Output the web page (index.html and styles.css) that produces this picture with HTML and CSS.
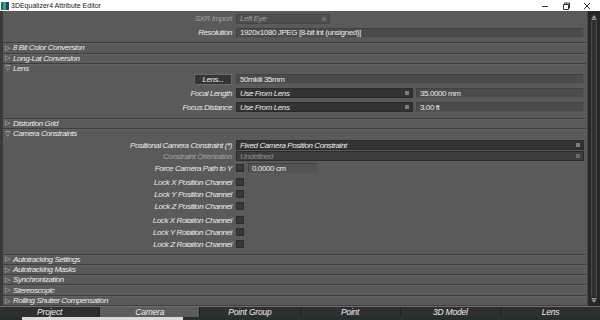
FILE: index.html
```html
<!DOCTYPE html>
<html lang="en">
<head>
    <meta charset="UTF-8">
    <title>3DEqualizer4 Attribute Editor</title>
    <link rel="stylesheet" href="styles.css">
</head>
<body>
<div class="window">
    <!--标题栏-->
    <div class="titlebar">
        <span class="app-icon"></span>
        <span class="title">3DEqualizer4 Attribute Editor</span>
        <div class="winctl">
            <span class="ctl"><svg width="8" height="8" viewBox="0 0 8 8"><path d="M1 4.5h6" stroke="#333" stroke-width="1"/></svg></span>
            <span class="ctl"><svg width="8" height="8" viewBox="0 0 8 8"><path d="M1.5 2.5h5v5h-5z M2.5 2.5v-1.5h5v5h-1" fill="none" stroke="#333" stroke-width="1"/></svg></span>
            <span class="ctl"><svg width="8" height="8" viewBox="0 0 8 8"><path d="M1 1l6 6M7 1l-6 6" stroke="#333" stroke-width="1"/></svg></span>
        </div>
    </div>

    <div class="main">
        <div class="panel">
            <!--顶部-->
            <div class="sect top">
                <div class="row">
                    <span class="lbl dim">SXR Import</span>
                    <div class="fld combo sxr"><span>Left Eye</span><i class="knob"></i></div>
                </div>
                <div class="row">
                    <span class="lbl">Resolution</span>
                    <div class="fld grow">1920x1080 JPEG [8-bit int (unsigned)]</div>
                </div>
            </div>

            <div class="hdr tall"><b>▷</b>8 Bit Color Conversion</div>
            <div class="hdr"><b>▷</b>Long-Lat Conversion</div>
            <div class="hdr"><b>▽</b>Lens</div>

            <!--镜头-->
            <div class="sect lens">
                <div class="row">
                    <span class="lbl"><span class="btn">Lens...</span></span>
                    <div class="fld grow">50mkiii 35mm</div>
                </div>
                <div class="row">
                    <span class="lbl">Focal Length</span>
                    <div class="fld combo half"><span>Use From Lens</span><i class="knob"></i></div>
                    <div class="fld grow num">35.0000 mm</div>
                </div>
                <div class="row">
                    <span class="lbl">Focus Distance</span>
                    <div class="fld combo half"><span>Use From Lens</span><i class="knob"></i></div>
                    <div class="fld grow num">3.00 ft</div>
                </div>
            </div>

            <div class="hdr"><b>▷</b>Distortion Grid</div>
            <div class="hdr tall"><b>▽</b>Camera Constraints</div>

            <!--相机约束-->
            <div class="sect cons">
                <div class="row">
                    <span class="lbl">Positional Camera Constraint (*)</span>
                    <div class="fld combo grow"><span>Fixed Camera Position Constraint</span><i class="knob"></i></div>
                </div>
                <div class="row">
                    <span class="lbl dim">Constraint Orientation</span>
                    <div class="fld combo grow off"><span>Undefined</span><i class="knob"></i></div>
                </div>
                <div class="row force">
                    <span class="lbl">Force Camera Path to Y</span>
                    <span class="chk"></span>
                    <div class="fld small">0.0000 cm</div>
                </div>
                <div class="group">
                    <div class="row"><span class="lbl">Lock X Position Channel</span><span class="chk"></span></div>
                    <div class="row"><span class="lbl">Lock Y Position Channel</span><span class="chk"></span></div>
                    <div class="row"><span class="lbl">Lock Z Position Channel</span><span class="chk"></span></div>
                </div>
                <div class="group">
                    <div class="row"><span class="lbl">Lock X Rotation Channel</span><span class="chk"></span></div>
                    <div class="row"><span class="lbl">Lock Y Rotation Channel</span><span class="chk"></span></div>
                    <div class="row"><span class="lbl">Lock Z Rotation Channel</span><span class="chk"></span></div>
                </div>
            </div>

            <div class="hdr tall"><b>▷</b>Autotracking Settings</div>
            <div class="hdr"><b>▷</b>Autotracking Masks</div>
            <div class="hdr"><b>▷</b>Synchronization</div>
            <div class="hdr tall"><b>▷</b>Stereoscopic</div>
            <div class="hdr last"><b>▷</b>Rolling Shutter Compensation</div>
        </div>

        <!--滚动条-->
        <div class="scroll">
            <svg class="arr" width="6" height="6" viewBox="0 0 6 6"><path d="M0.5 4.5L3 1l2.5 3.5z" fill="#9a9a9a"/><path d="M0.5 5.5h5" stroke="#9a9a9a"/></svg>
            <div class="track"></div>
            <svg class="arr" width="6" height="6" viewBox="0 0 6 6"><path d="M0.5 0.5h5" stroke="#9a9a9a"/><path d="M0.5 1.5L3 5l2.5-3.5z" fill="#9a9a9a"/></svg>
        </div>
    </div>

    <!--选项卡-->
    <div class="tabs">
        <span class="tab">Project</span>
        <span class="tab on">Camera</span>
        <span class="tab">Point Group</span>
        <span class="tab">Point</span>
        <span class="tab">3D Model</span>
        <span class="tab">Lens</span>
    </div>
    <div class="foot"><span class="foot-bar"></span></div>
</div>
</body>
</html>
```
FILE: styles.css
```css
*{
    margin: 0;
    padding: 0;
    box-sizing: border-box;
}
body{
    width: 600px;
    height: 320px;
    overflow: hidden;
    background: #2b2b2b;
    font-family: "Liberation Sans", Arial, "DejaVu Sans", sans-serif;
}
.window{
    width: 600px;
    height: 320px;
    display: flex;
    flex-direction: column;
}

/* 标题栏 */
.titlebar{
    height: 11px;
    background: #fff;
    display: flex;
    align-items: center;
}
.app-icon{
    width: 8px;
    height: 8px;
    margin: 0 2px 0 1px;
    background: linear-gradient(90deg, #1d6b5e 0 30%, #3a9c8a 30% 60%, #184a6e 60%);
}
.title{
    font-size: 7px;
    color: #222;
    flex: 1;
}
.winctl{
    display: flex;
    padding-right: 3px;
}
.ctl{
    width: 21px;
    height: 11px;
    display: flex;
    align-items: center;
    justify-content: center;
}

/* 主体 */
.main{
    height: 295px;
    display: flex;
    border-left: 3px solid #3a3a3a;
}
.panel{
    flex: 1;
    background: #5a5a5a;
    display: flex;
    flex-direction: column;
    border-right: 1px solid #474747;
    font-size: 8px;
    letter-spacing: -0.4px;
    color: #ececec;
}
.sect{
    display: flex;
    flex-direction: column;
    padding-right: 3px;
}
.sect.top{
    padding-top: 2px;
    padding-bottom: 4px;
    gap: 3px;
}
.sect.lens{
    padding-top: 1px;
    padding-bottom: 5px;
    gap: 3px;
}
.sect.cons{
    padding-top: 1px;
    padding-bottom: 4px;
}
.sect.cons .force{
    margin-top: 1px;
}
.group{
    display: flex;
    flex-direction: column;
    gap: 1px;
    margin-top: 3px;
}
.row{
    height: 11px;
    display: flex;
    align-items: center;
}
.lbl{
    width: 229px;
    margin-right: 4px;
    text-align: right;
    font-style: italic;
    display: flex;
    justify-content: flex-end;
}
.dim{
    color: #a2a2a2;
}

/* 输入框 */
.fld{
    height: 10px;
    background: #4b4b4b;
    border: 1px solid #414141;
    border-right-color: #555;
    border-bottom-color: #555;
    padding-left: 3px;
    display: flex;
    align-items: center;
    white-space: nowrap;
    overflow: hidden;
}
.grow{
    flex: 1;
}
.combo{
    background: #333;
    border-color: #2b2b2b;
    font-style: italic;
    justify-content: space-between;
    padding-right: 3px;
}
.combo.sxr{
    width: 94px;
    background: #4e4e4e;
    border-color: #464646;
    color: #a0a0a0;
}
.combo.off{
    background: #3d3d3d;
    color: #8e8e8e;
}
.combo.half{
    width: 177px;
    margin-right: 3px;
}
.knob{
    width: 4px;
    height: 4px;
    background: #7c7c7c;
}
.combo.off .knob,
.combo.sxr .knob{
    background: #6a6a6a;
}
.btn{
    width: 38px;
    height: 11px;
    background: #353535;
    border: 1px solid #6a6a6a;
    display: flex;
    align-items: center;
    justify-content: center;
}
.chk{
    width: 8px;
    height: 8px;
    background: #383838;
    border: 1px solid #2c2c2c;
}
.fld.small{
    width: 70px;
    height: 10px;
    margin-left: 4px;
    background: #535353;
}

/* 分组标题 */
.hdr{
    height: 10px;
    border-top: 1px solid #3e3e3e;
    box-shadow: inset 0 1px 0 #626262;
    display: flex;
    align-items: center;
    padding-left: 2px;
    font-style: italic;
    margin-right: 1px;
}
.hdr.tall{
    height: 11px;
}
.hdr.last{
    border-bottom: 1px solid #3e3e3e;
    height: 11px;
}
.hdr b{
    font-family: "DejaVu Sans", sans-serif;
    font-weight: normal;
    font-style: normal;
    font-size: 7px;
    color: #d0d0d0;
    width: 8px;
    letter-spacing: 0;
}

/* 滚动条 */
.scroll{
    width: 12px;
    background: #262626;
    display: flex;
    flex-direction: column;
    align-items: center;
    padding: 2px 0 1px;
}
.arr{
    display: block;
    margin: 1px 0;
}
.track{
    flex: 1;
    width: 6px;
    background: #2e2e2e;
    border-left: 1px solid #4a4a4a;
    border-right: 1px solid #4a4a4a;
}

/* 选项卡 */
.tabs{
    height: 11px;
    display: flex;
    border-top: 1px solid #6e6e6e;
}
.tab{
    flex: 1;
    background: #2f2f2f;
    border-left: 1px solid #1f1f1f;
    color: #eee;
    font-size: 8.5px;
    font-style: italic;
    letter-spacing: -0.2px;
    display: flex;
    align-items: center;
    justify-content: center;
}
.tab:first-child{
    border-left: none;
}
.tab.on{
    background: #5c5c5c;
}
.foot{
    height: 3px;
    background: #24302f;
    padding-left: 22px;
}
.foot-bar{
    display: block;
    width: 161px;
    height: 3px;
    background: #d8dcdc;
}
```
